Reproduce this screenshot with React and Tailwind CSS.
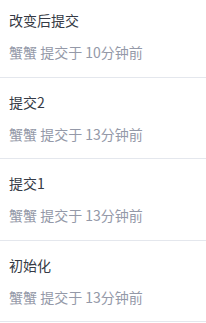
export default function App() {
  const items = [
    { t: "改变后提交", s: "10分钟前" },
    { t: "提交2", s: "13分钟前" },
    { t: "提交1", s: "13分钟前" },
    { t: "初始化", s: "13分钟前" },
  ];
  return (
    <div className="w-[206px] h-[323px] overflow-hidden bg-white" style={{ fontFamily: '"Noto Sans CJK SC", sans-serif' }}>
      <div className="-mt-[4px]">
        {items.map((it, i) => (
          <div key={i} className="h-[81.5px] border-b border-[#e4e7ed] px-[9px] pt-[13px]">
            <div className="text-[14px] leading-[22px] text-[#353a45]">{it.t}</div>
            <div className="mt-[10px] text-[14px] leading-[22px] text-[#9499a8]">蟹蟹 提交于 {it.s}</div>
          </div>
        ))}
      </div>
    </div>
  );
}
